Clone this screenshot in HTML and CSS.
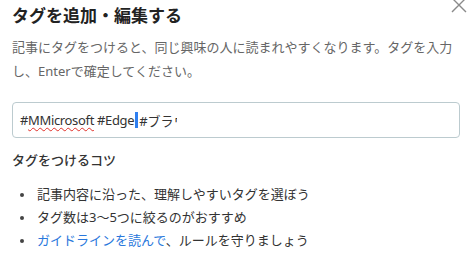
FILE: index.html
```html
<!DOCTYPE html>
<html lang="ja">
<head>
<meta charset="utf-8">
<link rel="stylesheet" href="styles.css">
</head>
<body>
<div class="dialog">
  <button class="close" aria-label="閉じる">
    <svg width="18" height="18" viewBox="0 0 18 18"><path d="M2 2 L16 16 M16 2 L2 16" stroke="#8a8a8a" stroke-width="1.4" fill="none"/></svg>
  </button>
  <h1 class="title">タグを追加・編集する</h1>
  <p class="desc">記事にタグをつけると、同じ興味の人に読まれやすくなります。タグを入力し、Enterで確定してください。</p>
  <div class="input"><span class="latin">#<span class="typo">MMicrosoft</span> #Edge</span><span class="caret"></span><span>#ブラ</span><span class="clip">ウ</span></div>
  <h2 class="sub">タグをつけるコツ</h2>
  <ul class="tips">
    <li>記事内容に沿った、理解しやすいタグを選ぼう</li>
    <li>タグ数は3〜5つに絞るのがおすすめ</li>
    <li><a class="link" href="#">ガイドラインを読んで</a>、ルールを守りましょう</li>
  </ul>
</div>
</body>
</html>
```
FILE: styles.css
```css
* { box-sizing: border-box; }
html, body { margin: 0; padding: 0; background: #fff; }
body {
  font-family: "Noto Sans", "Noto Sans CJK JP", sans-serif;
  color: #333;
  overflow: hidden;
}
.dialog {
  position: relative;
  width: 468px;
  height: 253px;
  padding: 4px 8px 0 12px;
}
.close {
  position: absolute;
  top: -4px;
  right: 0px;
  border: 0;
  background: none;
  padding: 0;
  width: 18px;
  height: 18px;
}
.title {
  margin: 0;
  font-size: 17px;
  line-height: 24px;
  font-weight: 700;
  color: #222;
}
.desc {
  margin: 7px 0 0;
  font-size: 13px;
  line-height: 24px;
  color: #666;
}
.input {
  margin-top: 19px;
  height: 36px;
  border: 1px solid #bccbcf;
  border-radius: 4px;
  padding: 0 7px;
  display: flex;
  align-items: center;
  font-size: 13px;
  color: #333;
  white-space: nowrap;
}
.latin {
  letter-spacing: -0.35px;
}
.typo {
  text-decoration: underline wavy #e0302a;
  text-decoration-thickness: 1px;
  text-underline-offset: 2px;
}
.caret {
  display: inline-block;
  width: 3px;
  height: 16px;
  background: #2f7ff0;
  margin: 0 1px 0 1px;
}
.clip {
  display: inline-block;
  width: 3px;
  overflow: hidden;
}
.sub {
  margin: 12px 0 0;
  font-size: 13px;
  line-height: 20px;
  font-weight: 500;
  color: #333;
}
.tips {
  list-style: none;
  margin: 13px 0 0;
  padding: 0;
}
.tips li {
  position: relative;
  font-size: 13px;
  line-height: 23px;
  padding-left: 25px;
  color: #333;
}
.tips li::before {
  content: "";
  position: absolute;
  left: 8px;
  top: 10px;
  width: 4px;
  height: 4px;
  border-radius: 50%;
  background: #444;
}
.link {
  color: #2a78dc;
  text-decoration: none;
}
```
